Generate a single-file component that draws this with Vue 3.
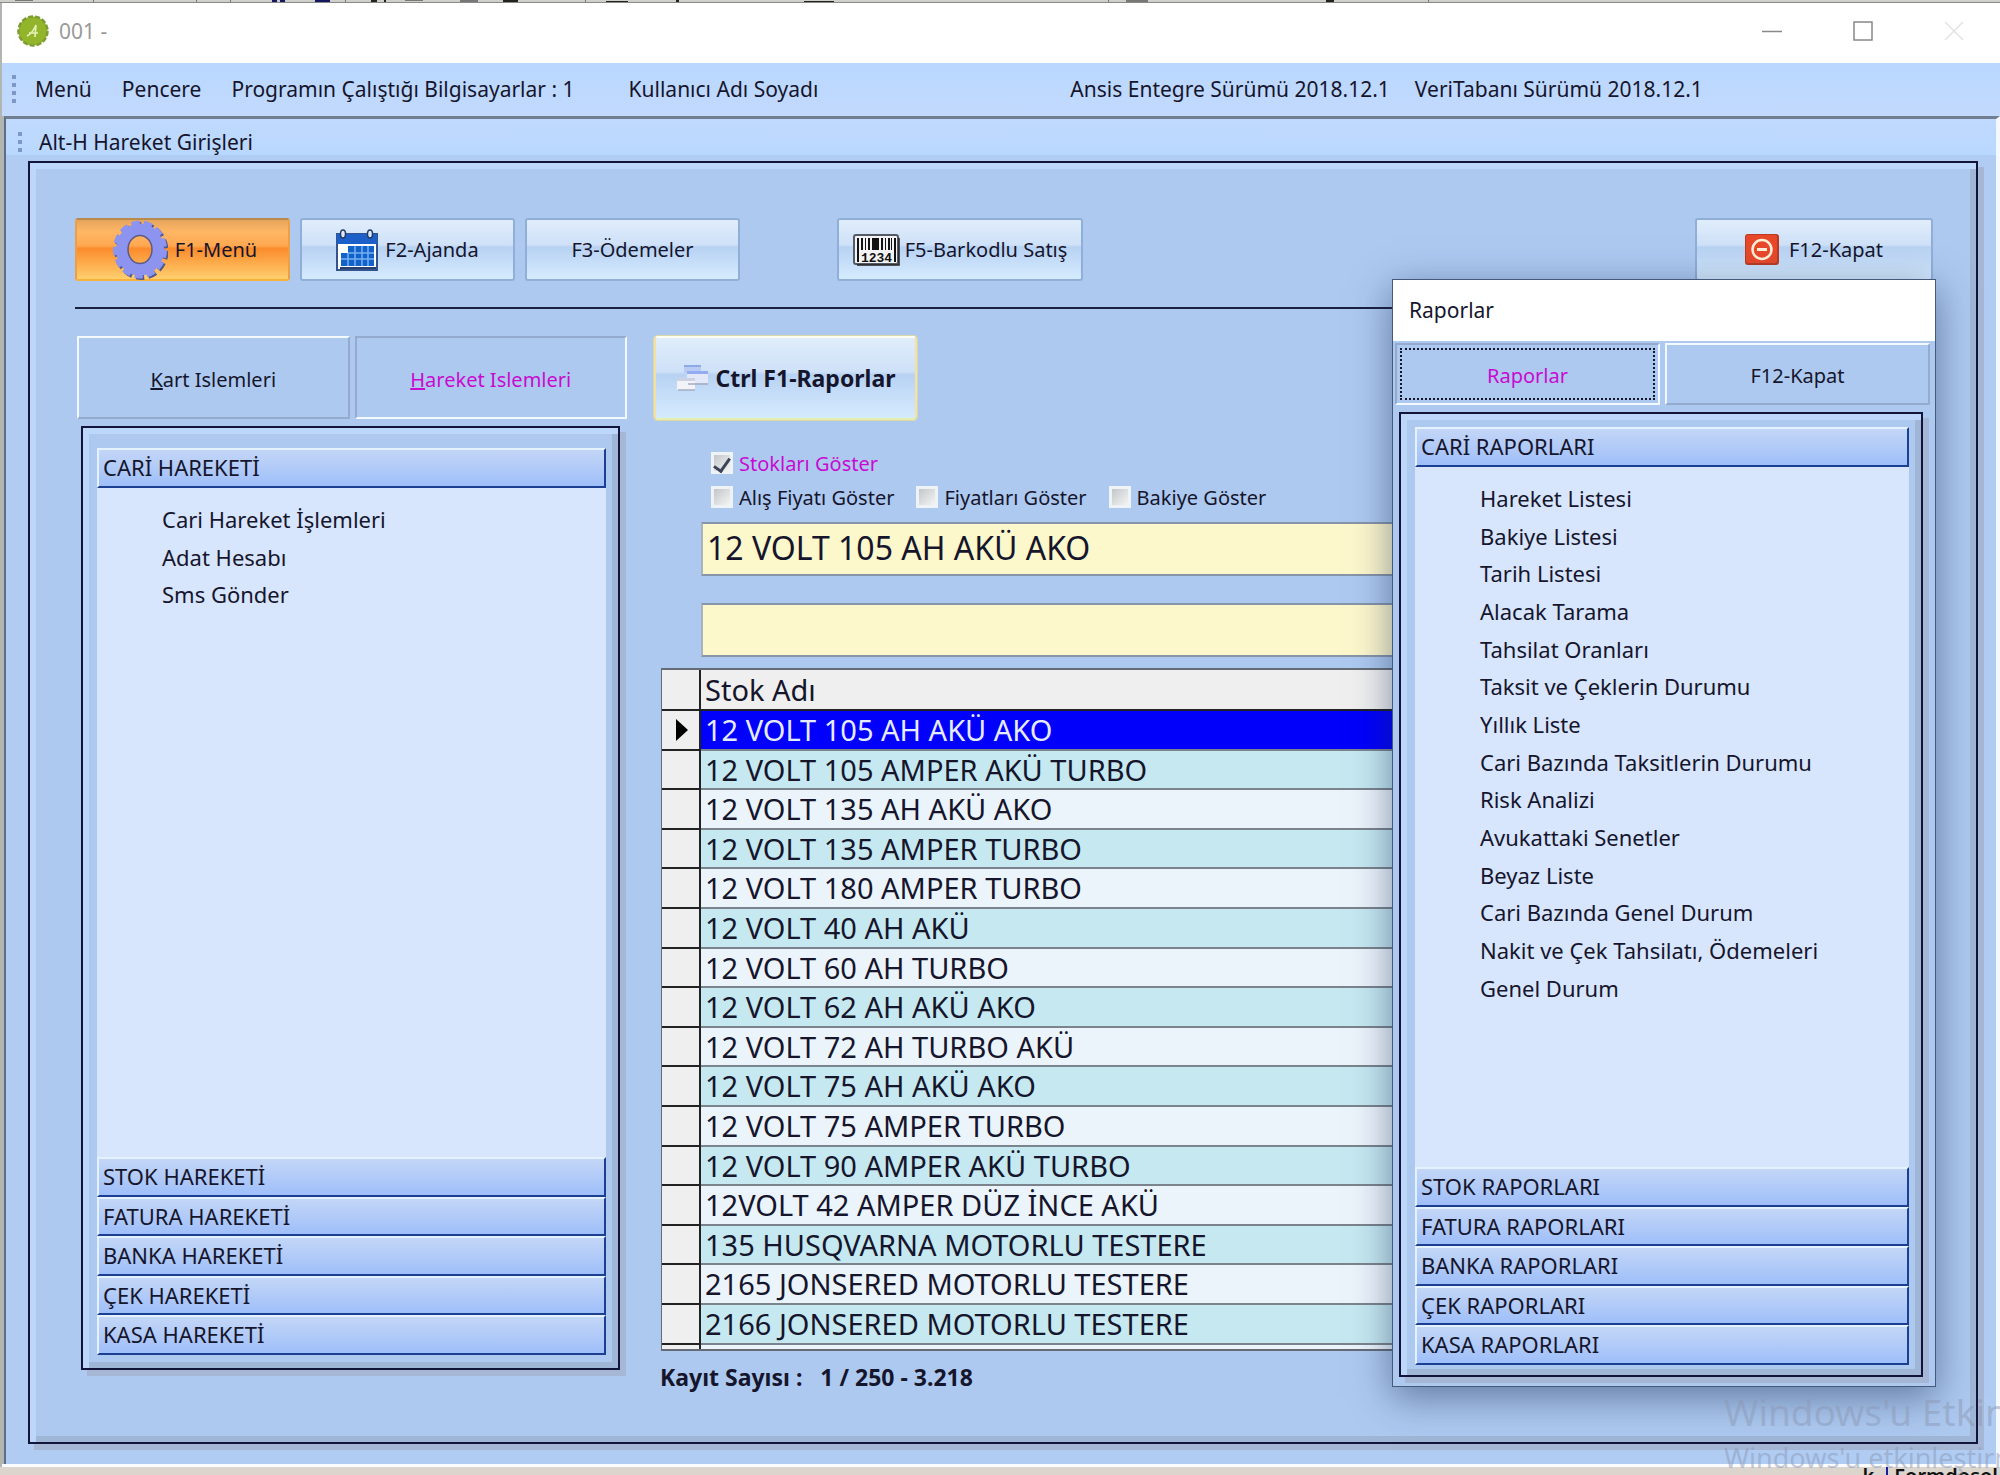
<script setup>
import {ref} from 'vue';

const movementGroups = ["STOK HAREKETİ", "FATURA HAREKETİ", "BANKA HAREKETİ", "ÇEK HAREKETİ", "KASA HAREKETİ"];
const movementItems = ["Cari Hareket İşlemleri", "Adat Hesabı", "Sms Gönder"];

const reportGroups = ["STOK RAPORLARI", "FATURA RAPORLARI", "BANKA RAPORLARI", "ÇEK RAPORLARI", "KASA RAPORLARI"];
const reportItems = [
  "Hareket Listesi",
  "Bakiye Listesi",
  "Tarih Listesi",
  "Alacak Tarama",
  "Tahsilat Oranları",
  "Taksit ve Çeklerin Durumu",
  "Yıllık Liste",
  "Cari Bazında Taksitlerin Durumu",
  "Risk Analizi",
  "Avukattaki Senetler",
  "Beyaz Liste",
  "Cari Bazında Genel Durum",
  "Nakit ve Çek Tahsilatı, Ödemeleri",
  "Genel Durum",
];

const stocks = [
  "12 VOLT 105 AH AKÜ AKO",
  "12 VOLT 105 AMPER AKÜ TURBO",
  "12 VOLT 135 AH AKÜ AKO",
  "12 VOLT 135 AMPER TURBO",
  "12 VOLT 180 AMPER TURBO",
  "12 VOLT 40 AH AKÜ",
  "12 VOLT 60 AH TURBO",
  "12 VOLT 62 AH AKÜ AKO",
  "12 VOLT 72 AH TURBO AKÜ",
  "12 VOLT 75 AH AKÜ AKO",
  "12 VOLT 75 AMPER TURBO",
  "12 VOLT 90 AMPER AKÜ TURBO",
  "12VOLT 42 AMPER DÜZ İNCE AKÜ",
  "135 HUSQVARNA MOTORLU TESTERE",
  "2165 JONSERED MOTORLU TESTERE",
  "2166 JONSERED MOTORLU TESTERE",
  "",
];

const selected = ref(0);
const stockName = ref(stocks[0]);
const stockCode = ref("");
const showStocks = ref(true);
const filters = ref([
  {label: "Alış Fiyatı Göster", on: false},
  {label: "Fiyatları Göster", on: false},
  {label: "Bakiye Göster", on: false},
]);

const selectRow = (index) => {
  selected.value = index;
  stockName.value = stocks[index];
};
</script>

<template>
  <div class="desktop">
    <svg class="desktop-top" aria-hidden="true">
      <g fill="#777">
        <path d="M15 0h18v1H15zM93 0h1v3h-1zM196 0h1v3h-1zM230 0h1v3h-1zM345 0h1v3h-1zM405 0h18v1h-18zM460 0h18v2h-18zM585 0h1v3h-1zM1108 0h1v3h-1zM1126 0h22v2h-22zM1428 0h1v3h-1z" />
      </g>
      <path fill="#151560" d="M272 0h5v2h-5zM280 0h5v2h-5zM315 0h15v2h-15z" />
      <path fill="#222" d="M371 0h6v2h-6zM384 0h2v2h-2zM503 0h15v2h-15zM606 1h22v1h-22zM676 0h3v2h-3zM804 1h30v1h-30zM1326 0h8v2h-8z" />
    </svg>

    <main class="window">
      <header class="title-bar">
        <svg class="app-icon" viewBox="0 0 32 32" aria-hidden="true">
          <circle cx="16" cy="16" r="14.5" fill="#93b52c" stroke="#7d9c33" stroke-width="2.5" stroke-dasharray="5 2" />
          <path d="M10 21c4-2 7-6 9-11l-1 12M12 18h9" fill="none" stroke="#e6f3b4" stroke-width="1.6" />
        </svg>
        <span class="title">001 -</span>
        <div class="window-buttons">
          <button aria-label="Küçült"><svg viewBox="0 0 20 20"><path d="M0 10.500h20" stroke="#888" stroke-width="1.500" /></svg></button>
          <button aria-label="Büyüt"><svg viewBox="0 0 20 20"><rect x="1" y="1" width="18" height="18" fill="none" stroke="#888" stroke-width="1.500" /></svg></button>
          <button aria-label="Kapat"><svg viewBox="0 0 20 20"><path d="M1 1l18 18M19 1L1 19" stroke="#e2e2e2" stroke-width="1.500" /></svg></button>
        </div>
      </header>

      <nav class="menu-bar">
        <span class="grip"></span>
        <button>Menü</button>
        <button>Pencere</button>
        <span>Programın Çalıştığı Bilgisayarlar : 1</span>
        <span class="user">Kullanıcı Adı Soyadı</span>
        <span class="version">Ansis Entegre Sürümü 2018.12.1</span>
        <span class="db-version">VeriTabanı Sürümü 2018.12.1</span>
      </nav>

      <section class="mdi">
        <div class="child-bar"><span class="grip"></span>Alt-H Hareket Girişleri</div>

        <div class="frame bevel">
          <div class="toolbar">
            <button class="tool active">
              <svg class="gear" viewBox="0 0 56 60" aria-hidden="true">
                <g fill="none" transform="translate(1.500 1.500)">
                  <ellipse cx="28" cy="30" rx="24" ry="26" stroke="#53598f" stroke-width="6" stroke-dasharray="8 4.100" />
                </g>
                <ellipse cx="28" cy="30" rx="24" ry="26" fill="none" stroke="#8d94f0" stroke-width="6" stroke-dasharray="8 4.100" />
                <ellipse cx="28" cy="30" rx="18" ry="20" fill="none" stroke="#8d94f0" stroke-width="12" />
                <ellipse cx="28" cy="30" rx="12" ry="14" fill="none" stroke="#5b5a88" stroke-width="1.500" />
              </svg>
              F1-Menü
            </button>
            <button class="tool">
              <svg class="calendar" viewBox="0 0 42 42" aria-hidden="true">
                <rect x="1" y="5" width="40" height="36" fill="#fff" stroke="#35538c" stroke-width="2" />
                <rect x="1" y="5" width="40" height="10" fill="#1c5fc8" />
                <path d="M4 38h36v2H4z" fill="#27406e" />
                <path d="M12 17h26v20H5V24h7z" fill="#1263c9" />
                <path d="M12 24h26M5 30h33M12 24v13M19 17v20M26 17v20M32 17v20" stroke="#75b0f2" stroke-width="1.500" />
                <g fill="#dfe9fa" stroke="#223a66" stroke-width="1.500">
                  <ellipse cx="7" cy="5" rx="2.500" ry="4" />
                  <ellipse cx="34" cy="5" rx="2.500" ry="4" />
                </g>
              </svg>
              F2-Ajanda
            </button>
            <button class="tool">F3-Ödemeler</button>
            <button class="tool barcode-tool">
              <svg class="barcode" viewBox="0 0 47 32" aria-hidden="true">
                <rect x="1" y="1" width="44" height="29" rx="2" fill="#f3f3f6" stroke="#555b66" stroke-width="2" />
                <path d="M4 31h42V4" fill="none" stroke="#222" stroke-width="1.500" />
                <path d="M4 4h2v24H4zM8 4h2v12H8zM12 4h1v12h-1zM15 4h2v12h-2zM19 4h7v12h-7zM28 4h2v12h-2zM32 4h1v12h-1zM35 4h2v12h-2zM38 4h1v12h-1zM41 4h2v24h-2z" fill="#111" />
                <text x="23.500" y="28" text-anchor="middle">1234</text>
              </svg>
              F5-Barkodlu Satış
            </button>
            <button class="tool close-tool">
              <svg class="stop" viewBox="0 0 34 31" aria-hidden="true">
                <rect width="34" height="31" rx="3" fill="#b83c22" />
                <rect x="1" y="1" width="31" height="28" rx="2" fill="#e8492a" />
                <circle cx="17" cy="15.500" r="9.500" fill="none" stroke="#fff0d8" stroke-width="2.500" />
                <path d="M12 15.500h10" stroke="#fff0d8" stroke-width="3" />
              </svg>
              F12-Kapat
            </button>
          </div>

          <div class="body">
            <div class="side">
              <div class="tabs">
                <button class="tab"><span><u>K</u>art Islemleri</span></button>
                <button class="tab pressed"><span><u>H</u>areket Islemleri</span></button>
              </div>
              <div class="panel bevel">
                <button class="group">CARİ HAREKETİ</button>
                <ul class="items">
                  <li v-for="item in movementItems" :key="item"><a href="#">{{ item }}</a></li>
                </ul>
                <button v-for="group in movementGroups" :key="group" class="group">{{ group }}</button>
              </div>
            </div>

            <div class="stock">
              <button class="tool report-tool">
                <svg class="sheets" viewBox="0 0 33 28" aria-hidden="true">
                  <path d="M8 1h17v8H8z" fill="#b9caf3" />
                  <path d="M8 1h17v2H8z" fill="#8ea8e8" />
                  <path d="M11 7h21v12H11z" fill="#e3e8f8" />
                  <path d="M11 7h21v3H11z" fill="#93abf0" />
                  <path d="M1 14h18v12H1z" fill="#f1f3f8" />
                  <path d="M1 14h18v3H1z" fill="#ccd2e4" />
                  <path d="M2 26h17M12 20h20" stroke="#a5adbf" stroke-width="1.500" />
                </svg>
                Ctrl F1-Raporlar
              </button>

              <div class="checks">
                <label class="check marked"><input v-model="showStocks" type="checkbox" />Stokları Göster</label>
              </div>
              <div class="checks">
                <label v-for="filter in filters" :key="filter.label" class="check">
                  <input v-model="filter.on" type="checkbox" />{{ filter.label }}
                </label>
              </div>

              <input v-model="stockName" class="field" type="text" aria-label="Stok Adı" />
              <input v-model="stockCode" class="field second" type="text" aria-label="Stok Kodu" />

              <div class="grid">
                <table>
                  <thead>
                    <tr><th class="mark"></th><th>Stok Adı</th></tr>
                  </thead>
                  <tbody>
                    <tr
                        v-for="(stock, index) in stocks"
                        :key="stock"
                        :class="{selected: index === selected}"
                        @click="selectRow(index)"
                    >
                      <td class="mark">
                        <svg v-if="index === selected" viewBox="0 0 12 22"><path d="M0 0l12 11L0 22z" /></svg>
                      </td>
                      <td>{{ stock }}</td>
                    </tr>
                  </tbody>
                </table>
              </div>
              <p class="count"><span>Kayıt Sayısı :</span><span>1 / 250 - 3.218</span></p>
            </div>
          </div>

          <section class="dialog" role="dialog" aria-label="Raporlar">
            <h2>Raporlar</h2>
            <div class="dialog-body">
              <div class="tabs">
                <button class="tab pressed focused">Raporlar</button>
                <button class="tab">F12-Kapat</button>
              </div>
              <div class="panel bevel">
                <button class="group">CARİ RAPORLARI</button>
                <ul class="items">
                  <li v-for="item in reportItems" :key="item"><a href="#">{{ item }}</a></li>
                </ul>
                <button v-for="group in reportGroups" :key="group" class="group">{{ group }}</button>
              </div>
            </div>
          </section>
        </div>
      </section>
    </main>

    <footer class="desktop-bottom"><span>k</span><span class="caret">Formdosol</span></footer>

    <div class="watermark">
      <div class="big">Windows'u Etkinleştir</div>
      <div class="small">Windows'u etkinleştirmek</div>
    </div>
  </div>
</template>

<style>
body {
  margin: 0;
}
</style>

<style scoped>
* {
  box-sizing: border-box;
}

.desktop {
  position: relative;
  display: flex;
  flex-direction: column;
  height: 100vh;
  min-height: 1200px;
  overflow: hidden;
  background: #b2b6b2;
  color: #15152c;
  font-family: "Noto Sans", "Open Sans", sans-serif;
  font-size: 21px;
}

button {
  padding: 0;
  border: 0;
  background: none;
  color: inherit;
  font: inherit;
}

.desktop-top {
  display: block;
  flex: none;
  width: 100%;
  height: 3px;
  background: #cfcfcb;
  border-bottom: 1px solid #8a8a86;
}

.desktop-bottom {
  display: flex;
  justify-content: flex-end;
  gap: 12px;
  flex: none;
  height: 8px;
  padding-right: 2px;
  overflow: hidden;
  background: #dbd5ce;
  color: #111;
  font-size: 20px;
  font-weight: 600;
  line-height: 18px;
}

.caret {
  padding-left: 6px;
  border-left: 2px solid #1c1ca0;
}

.window {
  display: flex;
  flex-direction: column;
  flex: 1;
  min-height: 0;
  margin-left: 2px;
  border-bottom: 3px solid #fafcff;
}

/* title and menu */
.title-bar {
  display: flex;
  align-items: center;
  flex: none;
  height: 60px;
  padding: 0 36px 4px 15px;
  background: #fff;
  color: #999;
}

.app-icon {
  width: 32px;
  height: 32px;
}

.title {
  margin-left: 10px;
}

.window-buttons {
  display: flex;
  gap: 71px;
  margin-left: auto;
}

.window-buttons svg {
  display: block;
  width: 20px;
  height: 20px;
}

.menu-bar {
  display: flex;
  align-items: center;
  gap: 30px;
  flex: none;
  height: 53px;
  padding: 0 0 2px 10px;
  background: linear-gradient(#b9d8ff, #c3d9fd);
  white-space: nowrap;
}

.grip {
  width: 4px;
  height: 28px;
  background: repeating-linear-gradient(#7d97c8 0 4px, transparent 4px 8px);
}

.menu-bar .grip {
  margin-right: -11px;
}

.user {
  margin-left: 24px;
}

.version {
  margin-left: 222px;
}

.db-version {
  margin-left: -5px;
}

.mdi {
  display: flex;
  flex-direction: column;
  flex: 1;
  min-height: 0;
  margin-left: 2px;
  border-top: 3px solid #6f7f8f;
  border-left: 2px solid #5f6e86;
  border-right: 4px solid #f4f8ff;
  background: #b0ccf3;
}

.child-bar {
  display: flex;
  align-items: center;
  gap: 17px;
  flex: none;
  height: 36px;
  padding: 10px 0 0 12px;
  background: linear-gradient(#c0d9fd, #b9d8ff);
}

.child-bar .grip {
  height: 20px;
}

.bevel {
  border: 2px solid #13143a;
  background: #adc9f0;
  box-shadow: inset 6px 6px 0 #bdd7fa, inset -6px -6px 0 #a0b6d6, 6px 6px 0 #a6b7d6;
}

.frame {
  position: relative;
  display: flex;
  flex-direction: column;
  flex: 1;
  min-height: 0;
  margin: 6px 18px 20px 22px;
  padding: 55px 43px 0 45px;
}

/* toolbar */
.toolbar {
  display: flex;
  gap: 10px;
  flex: none;
  padding-bottom: 26px;
  border-bottom: 2px solid #1a2140;
}

.tool {
  display: flex;
  align-items: center;
  justify-content: center;
  gap: 7px;
  width: 215px;
  height: 63px;
  border: 2px solid #8fafd9;
  border-radius: 3px;
  background: linear-gradient(#e0edfb, #cfe1f8 42%, #b8d2f3 46%, #d5ebfe);
  font-size: 20px;
  white-space: nowrap;
}

.tool.active {
  padding-left: 4px;
  border-color: #b98a4d #eba047 #fbb03c;
  background: linear-gradient(#e6a45c, #ffb765 20%, #ffa750 44%, #fb8b2c 48%, #ffcf6e);
}

.tool svg {
  flex: none;
}

.gear {
  width: 56px;
  height: 61px;
}

.calendar {
  width: 42px;
  height: 42px;
}

.barcode {
  width: 47px;
  height: 32px;
}

.barcode text {
  fill: #111;
  font: bold 13px "Liberation Mono", monospace;
}

.stop {
  width: 34px;
  height: 31px;
}

.tool.barcode-tool {
  gap: 5px;
  width: 246px;
  margin-left: 87px;
}

.tool.close-tool {
  gap: 10px;
  width: 238px;
  margin-left: auto;
}

.body {
  display: grid;
  grid-template-columns: 550px 1fr;
  gap: 27px;
  flex: 1;
  min-height: 0;
  padding: 27px 0 0 2px;
}

/* side panel */
.side {
  display: flex;
  flex-direction: column;
  padding-bottom: 72px;
}

.tabs {
  display: flex;
  gap: 5px;
  flex: none;
  height: 83px;
}

.tab {
  flex: 1;
  padding-top: 3px;
  border: 2px solid;
  border-color: #f2f9ff #94abcf #94abcf #f2f9ff;
  background: #adc9f0;
  font-size: 20px;
}

.tab.pressed {
  border-color: #94abcf #f2f9ff #f2f9ff #94abcf;
  color: #c80bd0;
}

.tab.focused {
  outline: 2px dotted #15152c;
  outline-offset: -7px;
}

.panel {
  display: flex;
  flex-direction: column;
  flex: 1;
  min-height: 0;
  margin: 7px 7px 0 4px;
  padding: 20px 12px 13px 14px;
}

.group {
  flex: none;
  height: 40px;
  padding: 0 0 2px 4px;
  border: 2px solid;
  border-color: #e4f2ff #1c3f91 #1c3f91 #e4f2ff;
  background: linear-gradient(#c3d6f6, #9fbffa);
  font-size: 22px;
  line-height: 34px;
  text-align: left;
}

.group:nth-child(even) {
  height: 39px;
}

.items {
  flex: 1;
  min-height: 0;
  margin: 0;
  padding: 12px 0 0 65px;
  overflow: hidden;
  background: #d7e5fd;
  font-size: 22px;
  line-height: 38px;
  list-style: none;
}

.items li:nth-child(3n) {
  line-height: 37px;
}

.items a {
  color: inherit;
  text-decoration: none;
}

/* stock list */
.stock {
  display: flex;
  flex-direction: column;
  min-width: 0;
  min-height: 0;
  padding-bottom: 50px;
}

.tool.report-tool {
  flex: none;
  width: 263px;
  height: 84px;
  margin-bottom: 26px;
  border-color: #fdfdf0 #f0e2a8 #e8eeb0 #f6dfa4;
  outline: 1px solid #d8d8a8;
  font-size: 23px;
  font-weight: bold;
}

.sheets {
  width: 33px;
  height: 28px;
}

.checks {
  display: flex;
  gap: 22px;
  flex: none;
  height: 34px;
  padding-left: 57px;
}

.check {
  display: flex;
  align-items: center;
  gap: 6px;
  font-size: 20px;
  white-space: nowrap;
}

.marked {
  color: #c80bd0;
}

.check input {
  display: grid;
  place-items: center;
  width: 22px;
  height: 22px;
  margin: 0;
  appearance: none;
  border: 3px solid #eef3f8;
  background: linear-gradient(135deg, #c3c6c9, #f4f4f4);
}

.check input:checked::before {
  content: "";
  width: 7px;
  height: 14px;
  margin-bottom: 4px;
  border: solid #3c4658;
  border-width: 0 3px 3px 0;
  transform: rotate(35deg);
}

.field {
  flex: none;
  height: 54px;
  margin: 8px 0 0 47px;
  padding: 0 6px 4px 4px;
  border: 2px solid;
  border-color: #8795a8 #b9c3cc #8795a8 #a7b3c0;
  border-radius: 0;
  background: #fdf7cc;
  color: #15152c;
  font: 32px "Noto Sans", "Open Sans", sans-serif;
}

.field.second {
  margin-top: 27px;
}

.grid {
  flex: 1;
  min-height: 0;
  margin: 11px 0 0 7px;
  overflow: hidden;
  border: 2px solid #666c76;
  border-left-width: 1px;
}

table {
  width: 100%;
  border-collapse: collapse;
  font-size: 29px;
  line-height: 36px;
}

th, td {
  height: 40px;
  padding: 0 0 0 4px;
  border-bottom: 2px solid #7b848c;
  text-align: left;
  font-weight: normal;
}

tr:nth-child(5n + 2) td, tr:nth-child(5n + 4) td {
  height: 39px;
}

th {
  border-bottom-color: #222;
  background: #efefef;
}

tbody tr {
  background: #ebf3fb;
}

tbody tr:nth-child(even) {
  background: #c5e8f1;
}

tbody tr.selected {
  background: #0000fb;
  color: #e6ecff;
}

.mark {
  width: 38px;
  padding: 0 0 0 14px;
  border-right: 2px solid #222;
  border-bottom-color: #222;
  background: #efefef;
}

.mark svg {
  display: block;
  width: 12px;
  height: 22px;
}

.count {
  display: flex;
  gap: 18px;
  flex: none;
  margin: 11px 0 0 6px;
  font-weight: bold;
  font-size: 23px;
  line-height: 30px;
}

/* reports window */
.dialog {
  position: absolute;
  top: 116px;
  right: 40px;
  bottom: 55px;
  display: flex;
  flex-direction: column;
  width: 544px;
  border: 1px solid #47597a;
  background: #adc9f0;
  box-shadow: 0 10px 36px rgba(20, 40, 80, .5);
}

.dialog h2 {
  flex: none;
  margin: 0;
  padding-left: 16px;
  background: #fff;
  font-size: 21px;
  font-weight: normal;
  line-height: 61px;
}

.dialog-body {
  display: flex;
  flex-direction: column;
  flex: 1;
  min-height: 0;
  padding: 2px 5px 9px 2px;
}

.dialog .tabs {
  height: 62px;
}

.dialog .panel {
  margin: 7px 7px 0 4px;
  padding: 13px 12px 10px 14px;
}

/* activation notice over the desktop */
.watermark {
  position: absolute;
  right: 0;
  bottom: 0;
  width: 276px;
  height: 88px;
  overflow: hidden;
  color: rgba(140, 152, 180, .5);
  pointer-events: none;
  white-space: nowrap;
}

.big {
  font-size: 37px;
  line-height: 49px;
}

.small {
  font-size: 27px;
  line-height: 44px;
}
</style>
